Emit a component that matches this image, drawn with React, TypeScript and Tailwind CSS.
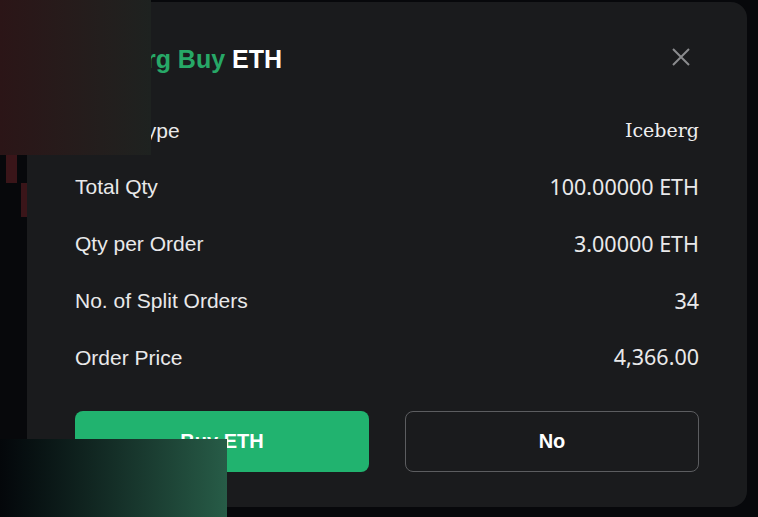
import React from "react";

const rows: { label: string; value: string; serif?: boolean }[] = [
  { label: "Order Type", value: "Iceberg", serif: true },
  { label: "Total Qty", value: "100.00000 ETH" },
  { label: "Qty per Order", value: "3.00000 ETH" },
  { label: "No. of Split Orders", value: "34" },
  { label: "Order Price", value: "4,366.00" },
];

export default function App() {
  return (
    <div className="relative w-[758px] h-[517px] overflow-hidden bg-[#07080b] pl-[27px] pt-[2px]">
      {/* background candles of the chart behind */}
      <div className="absolute left-[6px] top-[155px] w-[11px] h-[28px] bg-[#3a1519]" />
      <div className="absolute left-[21px] top-[183px] w-[6px] h-[34px] bg-[#3a1519]" />

      <div
        className="relative w-[720px] h-[505px] rounded-[16px] bg-[#1a1b1d] px-[48px] pt-[41px]"
        style={{ fontFamily: '"Liberation Sans", Arial, sans-serif' }}
      >
        <div className="h-[32px] flex items-center justify-between">
          <div className="pl-[7px] text-[25px] font-bold leading-[32px]">
            <span className="text-[#27a867]">Iceberg Buy </span>
            <span className="text-white">ETH</span>
          </div>
          <svg width="20" height="20" viewBox="0 0 20 20" className="-mt-[5px] mr-[8px]">
            <path d="M2 2 L18 18 M18 2 L2 18" stroke="#8b8c8e" strokeWidth="2" />
          </svg>
        </div>

        <div className="mt-[27px] flex flex-col">
          {rows.map((r) => (
            <div key={r.label} className="h-[56.75px] flex items-center justify-between">
              <span className="text-[21px] text-[#e9e9ea]">{r.label}</span>
              <span
                className={r.serif ? "text-[19px] text-[#eeeeef]" : "text-[21.5px] text-[#e9e9ea]"}
                style={{
                  fontFamily: r.serif ? '"DejaVu Serif", serif' : '"Noto Sans", sans-serif',
                }}
              >
                {r.value}
              </span>
            </div>
          ))}
        </div>

        <div className="mt-[24.75px] grid grid-cols-2 gap-[36px]">
          <button className="h-[61px] rounded-[8px] bg-[#21b36f] text-white text-[20px] font-bold">
            Buy ETH
          </button>
          <button className="h-[61px] rounded-[8px] border border-[#5c5d60] text-white text-[20px] font-bold">
            No
          </button>
        </div>
      </div>

      {/* overlays */}
      <div className="absolute left-0 top-0 w-[151px] h-[155px] bg-gradient-to-r from-[#2b1517] to-[#1e2220]" />
      <div className="absolute left-0 top-[439px] w-[227px] h-[78px] bg-gradient-to-r from-[#04070a] to-[#275c47]" />
    </div>
  );
}
